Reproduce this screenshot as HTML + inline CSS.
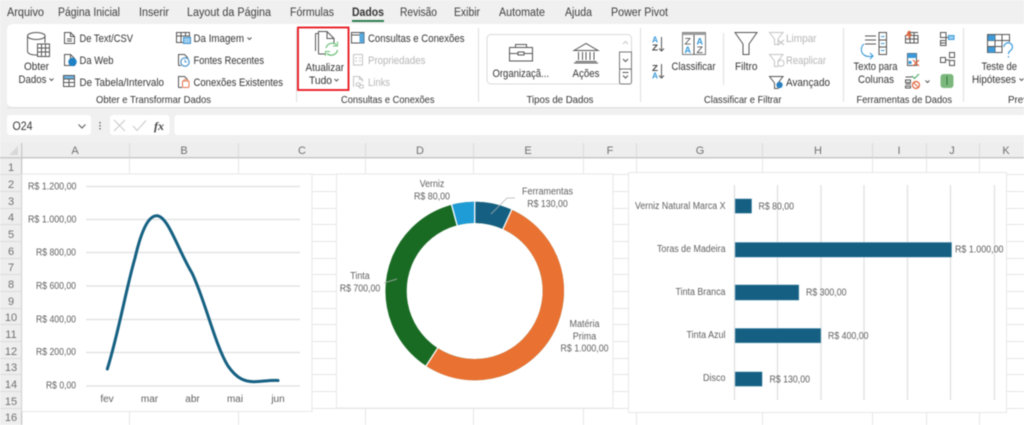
<!DOCTYPE html>
<html lang="pt-BR"><head><meta charset="utf-8"><title>Excel</title>
<style>
html,body{margin:0;padding:0;width:1024px;height:425px;overflow:hidden;background:#fff}
svg{display:block;filter:blur(.4px)}
text{font-family:"Liberation Sans",sans-serif;font-size:11px;fill:#333}
.g{fill:#b5b5b5}
.c{fill:#5f5f5f;font-size:10px}
.h{fill:#707070;font-size:11px}
.t{fill:#3d3d3d;font-size:11.500px}
.i{fill:none;stroke:#555;stroke-width:1}
.l{stroke:#e0e0e0;stroke-width:1.300}
.m{stroke:#e6e6e6;stroke-width:1}
</style></head><body>
<svg width="1024" height="425" viewBox="0 0 1024 425" xmlns="http://www.w3.org/2000/svg">
<rect width="1024" height="425" fill="#fff"/>
<rect width="1024" height="158" fill="#f0f0f0"/>
<!-- tabs -->
<g class="tabs">
<text class="t" x="7" y="16" textLength="37" lengthAdjust="spacingAndGlyphs">Arquivo</text>
<text class="t" x="58" y="16" textLength="62" lengthAdjust="spacingAndGlyphs">Página Inicial</text>
<text class="t" x="139" y="16" textLength="30" lengthAdjust="spacingAndGlyphs">Inserir</text>
<text class="t" x="187" y="16" textLength="84" lengthAdjust="spacingAndGlyphs">Layout da Página</text>
<text class="t" x="290" y="16" textLength="44" lengthAdjust="spacingAndGlyphs">Fórmulas</text>
<text class="t" x="352" y="16" textLength="32" lengthAdjust="spacingAndGlyphs" style="font-weight:bold;fill:#333">Dados</text>
<text class="t" x="400" y="16" textLength="37" lengthAdjust="spacingAndGlyphs">Revisão</text>
<text class="t" x="454" y="16" textLength="26" lengthAdjust="spacingAndGlyphs">Exibir</text>
<text class="t" x="499" y="16" textLength="46" lengthAdjust="spacingAndGlyphs">Automate</text>
<text class="t" x="565" y="16" textLength="27" lengthAdjust="spacingAndGlyphs">Ajuda</text>
<text class="t" x="611" y="16" textLength="57" lengthAdjust="spacingAndGlyphs">Power Pivot</text>
</g>
<rect x="352" y="20" width="32" height="2" fill="#2e7d4f"/>
<!-- ribbon -->
<rect x="7" y="24" width="1030" height="83" rx="6" fill="#fff"/>
<rect x="7" y="107" width="1017" height="1.500" fill="#e2e2e2"/>
<g stroke="#dedede"><path d="M296.500 28V102M478.500 28V102M640.500 28V102M843.500 28V102M963.500 28V102M723.500 33V85"/></g>
<!-- Obter dados -->
<g class="i">
<path d="M27.500 36V51C27.500 54 32 55 37 55M45 36V43"/><ellipse cx="36.300" cy="36" rx="8.800" ry="3.500"/>
<rect x="37.500" y="44" width="12" height="12.500" fill="#fff"/><path d="M37.500 48H49.500M37.500 52H49.500M41.500 44V56.500M45.500 44V56.500"/>
</g>
<text x="24" y="70" textLength="25" lengthAdjust="spacingAndGlyphs">Obter</text>
<text x="18.500" y="83" textLength="28" lengthAdjust="spacingAndGlyphs">Dados</text>
<path class="i" d="M49.500 78.500l2 2 2-2"/>
<!-- small icons col 1 -->
<g class="i">
<path d="M64.500 43.500V32.500H70.500L74.500 36.500V43.500ZM70.500 32.500V36.500H74.500"/><path d="M67 39H72M67 41H72"/>
<path d="M64.500 65.500V54.500H70.500L74.500 58.500V65.500ZM70.500 54.500V58.500H74.500"/>
</g>
<circle cx="72.500" cy="62" r="4.200" fill="#1f80c4"/>
<g class="i"><rect x="63.500" y="75.500" width="11" height="11"/><path d="M63.500 79H74.500M63.500 82.500H74.500M69 79V86.500"/></g>
<rect x="64" y="76" width="10" height="2.500" fill="#6db6e6"/>
<text x="79.500" y="42" textLength="53.500" lengthAdjust="spacingAndGlyphs">De Text/CSV</text>
<text x="79.500" y="64" textLength="34" lengthAdjust="spacingAndGlyphs">Da Web</text>
<text x="79.500" y="86" textLength="84.500" lengthAdjust="spacingAndGlyphs">De Tabela/Intervalo</text>
<!-- col 2 -->
<g class="i"><rect x="176.500" y="32.500" width="13" height="10"/><path d="M176.500 36H189.500M181 32.500V42.500M185.500 32.500V36"/><rect x="183.500" y="37.500" width="7" height="6" fill="#9ccdef" stroke="#3d93cf"/>
<path d="M178.500 65.500V54.500H184.500L187.500 57.500V59M178.500 65.500H181"/></g>
<circle cx="185" cy="62" r="4.200" fill="#fff" stroke="#2f86c5"/><path d="M185 59.500V62H187" fill="none" stroke="#2f86c5" stroke-width=".8"/>
<path class="i" d="M178.500 87.500V76.500H184.500L187.500 79.500V80M178.500 87.500H182"/>
<rect x="182.500" y="81" width="6.500" height="6.500" rx="1" fill="#fff" stroke="#e2744a"/><path d="M184 81v-1.500h3.500V81" fill="none" stroke="#e2744a" stroke-width=".8"/>
<text x="193.500" y="42" textLength="50.500" lengthAdjust="spacingAndGlyphs">Da Imagem</text>
<path class="i" d="M247.500 37.500l2 2 2-2"/>
<text x="193.500" y="64" textLength="70.500" lengthAdjust="spacingAndGlyphs">Fontes Recentes</text>
<text x="193.500" y="86" textLength="89.500" lengthAdjust="spacingAndGlyphs">Conexões Existentes</text>
<text x="96" y="103" textLength="115" lengthAdjust="spacingAndGlyphs" style="font-size:10.500px">Obter e Transformar Dados</text>
<!-- Atualizar -->
<rect x="298" y="27.500" width="50.500" height="62.500" fill="none" stroke="#e8141c" stroke-width="1.800"/>
<g class="i"><path d="M315.500 33.500V51M315.500 33.500H318"/><path d="M318.500 54V31.500H327L334 38.500V43M327 31.500V38.500H334M318.500 54H325"/></g>
<g fill="none" stroke="#6cbf78" stroke-width="1.200"><path d="M326 48a6.300 6.300 0 0 1 10.500-3"/><path d="M337.500 50a6.300 6.300 0 0 1-10.500 3.500"/><path d="M337.500 41.500V46H333M325.500 56V51.500H330" stroke-width="1"/></g>
<text x="305.500" y="71" textLength="38.500" lengthAdjust="spacingAndGlyphs">Atualizar</text>
<text x="309" y="84" textLength="23" lengthAdjust="spacingAndGlyphs">Tudo</text>
<path class="i" d="M334.500 79l2 2 2-2"/>
<!-- Consultas -->
<g class="i"><rect x="351.500" y="32.500" width="12.500" height="10.500"/><path d="M351.500 35H364"/></g>
<rect x="359.500" y="33" width="4.500" height="10" fill="#57a7dd"/>
<g fill="none" stroke="#c4c4c4"><rect x="353.500" y="54.500" width="9" height="10.500"/><path d="M355 58h2M359 58h2M355 61h2M359 61h2"/>
<path d="M353.500 87V76.500H359.500L362.500 79.500V82M359.500 76.500V79.500H362.500"/><rect x="356" y="83" width="4.500" height="3" rx="1.500"/><rect x="359" y="85" width="4.500" height="3" rx="1.500"/></g>
<text x="368" y="42" textLength="96.500" lengthAdjust="spacingAndGlyphs">Consultas e Conexões</text>
<text class="g" x="368" y="64" textLength="57.500" lengthAdjust="spacingAndGlyphs">Propriedades</text>
<text class="g" x="368" y="86" textLength="22" lengthAdjust="spacingAndGlyphs">Links</text>
<text x="341" y="103" textLength="93.500" lengthAdjust="spacingAndGlyphs" style="font-size:10.500px">Consultas e Conexões</text>
<!-- Tipos -->
<rect x="487" y="34.500" width="144.500" height="49.500" rx="4" fill="#fff" stroke="#dadada"/>
<g class="i"><rect x="509.500" y="47.500" width="23" height="13.500"/><path d="M509.500 53.500H518M524 53.500H532.500M515.500 47.500V44.500H526.500V47.500"/><rect x="518" y="52" width="6" height="3"/></g>
<g class="i"><path d="M574 50.500L586 43.500L598 50.500ZM575.500 61.500H596.500M574 63H598"/><path d="M578.500 52V60M582.500 52V60M586 52V60M590 52V60M594 52V60"/></g>
<text x="492.500" y="77" textLength="56.500" lengthAdjust="spacingAndGlyphs">Organizaçã...</text>
<text x="572.500" y="77" textLength="27" lengthAdjust="spacingAndGlyphs">Ações</text>
<rect x="619.500" y="52" width="12" height="17" fill="#fff" stroke="#777"/><rect x="619.500" y="69" width="12" height="15" rx="2" fill="#fff" stroke="#777"/>
<path d="M623 44l2.500-2.500L628 44" fill="none" stroke="#c8c8c8"/>
<path d="M623 59l2.500 2.500L628 59" class="i"/>
<path d="M622.500 72.500H628.500M623 75.500l2.500 2.500 2.500-2.500" class="i"/>
<text x="526.500" y="103" textLength="67" lengthAdjust="spacingAndGlyphs" style="font-size:10.500px">Tipos de Dados</text>
<!-- Classificar -->
<text x="652" y="42.500" textLength="6" lengthAdjust="spacingAndGlyphs" style="font-size:8px;font-weight:bold;fill:#3a9ad9">A</text>
<text x="652" y="50.500" textLength="6" lengthAdjust="spacingAndGlyphs" style="font-size:8px;font-weight:bold;fill:#444">Z</text>
<path class="i" d="M661.500 37V51M659 48.500l2.500 2.500 2.500-2.500"/>
<text x="652" y="71" textLength="6" lengthAdjust="spacingAndGlyphs" style="font-size:8px;font-weight:bold;fill:#444">Z</text>
<text x="652" y="78.500" textLength="6" lengthAdjust="spacingAndGlyphs" style="font-size:8px;font-weight:bold;fill:#3a9ad9">A</text>
<path class="i" d="M661.500 64V78M659 75.500l2.500 2.500 2.500-2.500"/>
<rect x="682.500" y="32.500" width="23" height="22" fill="#fff" stroke="#777"/><rect x="682.500" y="32.500" width="23" height="2.500" fill="#9a9a9a"/><path class="i" d="M694 35V54.500"/>
<text x="684.500" y="44.500" textLength="6.500" lengthAdjust="spacingAndGlyphs" style="font-size:9px;fill:#444">Z</text>
<text x="684.500" y="53" textLength="6.500" lengthAdjust="spacingAndGlyphs" style="font-size:9px;font-weight:bold;fill:#3a9ad9">A</text>
<text x="696.500" y="44.500" textLength="6.500" lengthAdjust="spacingAndGlyphs" style="font-size:9px;font-weight:bold;fill:#3a9ad9">A</text>
<text x="696.500" y="53" textLength="6.500" lengthAdjust="spacingAndGlyphs" style="font-size:9px;fill:#444">Z</text>
<text x="671.500" y="70" textLength="44" lengthAdjust="spacingAndGlyphs">Classificar</text>
<!-- Filtro -->
<path class="i" d="M735 32.500H757L749 44V54.500H743V44Z"/>
<text x="735" y="70" textLength="22.500" lengthAdjust="spacingAndGlyphs">Filtro</text>
<g fill="none" stroke="#c4c4c4"><path d="M769.500 32.500H783L778 39V44.500H774.500V39Z"/><path d="M778 40l6 5M784 40l-6 5" stroke="#bcbcbc"/><path d="M769.500 54.500H783L778 61V66.500H774.500V61Z"/><path d="M778 63a3 3 0 0 1 6 0a3 3 0 0 1-5 2.500"/></g>
<path class="i" d="M769.500 76.500H783L778 83V88.500H774.500V83Z"/>
<circle cx="779.500" cy="85" r="3.200" fill="#2a7fc0"/>
<text class="g" x="786" y="42" textLength="30.500" lengthAdjust="spacingAndGlyphs">Limpar</text>
<text class="g" x="786" y="64" textLength="40" lengthAdjust="spacingAndGlyphs">Reaplicar</text>
<text x="786" y="86" textLength="44" lengthAdjust="spacingAndGlyphs">Avançado</text>
<text x="704" y="103" textLength="77.500" lengthAdjust="spacingAndGlyphs" style="font-size:10.500px">Classificar e Filtrar</text>
<!-- Ferramentas -->
<g class="i"><path d="M865 36H876M865 40H876M865 44H876"/><rect x="879" y="32.500" width="7.500" height="22"/><path d="M879 40H886.500M879 47H886.500"/></g>
<path d="M881 36.500h3.500M881 43.500h3.500M881 50.500h3.500" stroke="#3a9ad9"/>
<path d="M864 44a7 7 0 0 0 0 11c3 2 7 1.500 9 1M870 53l3 3-3 3" fill="none" stroke="#3a9ad9" stroke-width="1.100"/>
<text x="853.500" y="70" textLength="44" lengthAdjust="spacingAndGlyphs">Texto para</text>
<text x="858" y="83" textLength="36" lengthAdjust="spacingAndGlyphs">Colunas</text>
<g class="i"><rect x="905.500" y="35.500" width="12.500" height="7.500"/><path d="M905.500 39H918M910 32V43M914 32V43M910 32.500H918"/></g>
<path d="M908 31l-2 5h3l-2 5 5-7h-3l2-3z" fill="#e2643b"/>
<rect x="907.500" y="53.500" width="9" height="12" fill="#fff" stroke="#555"/><rect x="907.500" y="53.500" width="9" height="4.500" fill="#3a9ad9"/><rect x="908.500" y="61" width="3" height="3" fill="#3a9ad9"/>
<path d="M913 60l6 6M919 60l-6 6" stroke="#e2643b" stroke-width="1.200"/>
<g class="i"><path d="M905.500 77H912M905.500 84H911"/><rect x="905.500" y="80" width="5" height="2.500"/><path d="M905.500 86h5v2h-5z"/></g>
<path d="M912 76l2.500 2.500L919 74" fill="none" stroke="#4aa564" stroke-width="1.100"/>
<circle cx="916" cy="85" r="3.500" fill="#fff" stroke="#e2643b" stroke-width="1.200"/><path d="M913.500 82.500l5 5" stroke="#e2643b"/>
<path class="i" d="M925.500 80.500l2 2 2-2"/>
<g class="i"><rect x="940.500" y="32.500" width="5.500" height="5"/><rect x="940.500" y="40.500" width="5.500" height="5"/><path d="M946 35v8h-5M946 37.500h3"/>
<rect x="940.500" y="57.500" width="5" height="5"/><rect x="949.500" y="52.500" width="5" height="5"/><rect x="949.500" y="60.500" width="5" height="5"/><path d="M945.500 60h4"/></g>
<rect x="948.500" y="35.500" width="5.500" height="4" fill="#9ccdef" stroke="#3a9ad9"/>
<rect x="940.500" y="74" width="13" height="14" rx="3" fill="#7cb87e"/><path d="M947 76v9" stroke="#2f7c36"/>
<text x="856.500" y="103" textLength="95.500" lengthAdjust="spacingAndGlyphs" style="font-size:10.500px">Ferramentas de Dados</text>
<!-- Teste -->
<g class="i"><rect x="987.500" y="34.500" width="22" height="18"/><path d="M987.500 40.500H1009.500M987.500 46.500H1009.500M995 34.500V52.500M1002 34.500V52.500"/></g>
<rect x="988" y="35" width="7" height="5.500" fill="#3f9bd8"/><rect x="988" y="47" width="7" height="5.500" fill="#3f9bd8"/>
<rect x="1002.500" y="42" width="11" height="11" fill="#fff"/>
<path d="M1004 47a4.200 4.200 0 1 1 6.500 3.500c-1.500 1-2 2-2 3.500M1008.500 56v1.500" fill="none" stroke="#3a9ad9" stroke-width="1.200"/>
<text x="981.500" y="70" textLength="35.500" lengthAdjust="spacingAndGlyphs">Teste de</text>
<text x="972" y="83" textLength="44" lengthAdjust="spacingAndGlyphs">Hipóteses</text>
<path class="i" d="M1019.500 78.500l2 2 2-2"/>
<text x="1008" y="103" textLength="38" lengthAdjust="spacingAndGlyphs" style="font-size:10.500px">Previsão</text>
<!-- formula bar -->
<rect x="7" y="115" width="84" height="20" rx="3" fill="#fff"/>
<text x="12.500" y="130" textLength="20" lengthAdjust="spacingAndGlyphs" style="font-size:11.500px">O24</text>
<path class="i" d="M78.500 124.500l3.500 3.500 3.500-3.500"/>
<path d="M100 122v1.500M100 125v1.500M100 128v1.500" stroke="#555" stroke-width="1.200"/>
<rect x="110" y="115" width="59.500" height="20" rx="3" fill="#fff"/>
<path d="M114 120l11 11M125 120l-11 11M133 126l4 4.500 9-10" fill="none" stroke="#c8c8c8"/>
<text x="154" y="130" style="font-family:'Liberation Serif',serif;font-style:italic;font-weight:bold;font-size:12px;fill:#444">fx</text>
<rect x="174.500" y="115" width="860" height="20" rx="3" fill="#fff"/>
<!-- sheet grid -->
<rect x="0" y="143" width="1024" height="15" fill="#eeeeee"/>
<rect x="0" y="143" width="22" height="282" fill="#eeeeee"/>
<path d="M18 146V155H9Z" fill="#d8d8d8"/>
<rect x="0" y="157" width="1024" height="1.500" fill="#c8c8c8"/>
<rect x="21" y="143" width="1.300" height="282" fill="#c8c8c8"/>
<g class="m">
<path d="M22 174.500H1024M22 191.500H1024M22 208.500H1024M22 224.500H1024M22 241.500H1024M22 258.500H1024M22 274.500H1024M22 291.500H1024M22 308.500H1024M22 324.500H1024M22 341.500H1024M22 358.500H1024M22 374.500H1024M22 391.500H1024M22 408.500H1024"/>
<path d="M129.500 158V425M238.500 158V425M365.500 158V425M473.500 158V425M583.500 158V425M636.500 158V425M762.500 158V425M872.500 158V425M926.500 158V425M979.500 158V425"/>
</g>
<g stroke="#dcdcdc"><path d="M129.500 143V157M238.500 143V157M365.500 143V157M473.500 143V157M583.500 143V157M636.500 143V157M762.500 143V157M872.500 143V157M926.500 143V157M979.500 143V157"/>
<path d="M0 174.500H21M0 191.500H21M0 208.500H21M0 224.500H21M0 241.500H21M0 258.500H21M0 274.500H21M0 291.500H21M0 308.500H21M0 324.500H21M0 341.500H21M0 358.500H21M0 374.500H21M0 391.500H21M0 408.500H21"/></g>
<g>
<text class="h" x="75" y="154" text-anchor="middle">A</text><text class="h" x="184" y="154" text-anchor="middle">B</text><text class="h" x="302" y="154" text-anchor="middle">C</text><text class="h" x="420" y="154" text-anchor="middle">D</text><text class="h" x="528" y="154" text-anchor="middle">E</text><text class="h" x="610" y="154" text-anchor="middle">F</text><text class="h" x="700" y="154" text-anchor="middle">G</text><text class="h" x="818" y="154" text-anchor="middle">H</text><text class="h" x="899" y="154" text-anchor="middle">I</text><text class="h" x="952" y="154" text-anchor="middle">J</text><text class="h" x="1006" y="154" text-anchor="middle">K</text>
<text class="h" x="11" y="171" text-anchor="middle">1</text><text class="h" x="11" y="188" text-anchor="middle">2</text><text class="h" x="11" y="205" text-anchor="middle">3</text><text class="h" x="11" y="221" text-anchor="middle">4</text><text class="h" x="11" y="238" text-anchor="middle">5</text><text class="h" x="11" y="255" text-anchor="middle">6</text><text class="h" x="11" y="271" text-anchor="middle">7</text><text class="h" x="11" y="288" text-anchor="middle">8</text><text class="h" x="11" y="305" text-anchor="middle">9</text><text class="h" x="11" y="321" text-anchor="middle">10</text><text class="h" x="11" y="338" text-anchor="middle">11</text><text class="h" x="11" y="355" text-anchor="middle">12</text><text class="h" x="11" y="371" text-anchor="middle">13</text><text class="h" x="11" y="388" text-anchor="middle">14</text><text class="h" x="11" y="405" text-anchor="middle">15</text><text class="h" x="11" y="421" text-anchor="middle">16</text>
</g>
<!-- chart 1 -->
<rect x="22" y="174" width="290" height="237.500" fill="#fff" stroke="#e8e8e8"/>
<g class="l"><path d="M86 186.500H300M86 219.500H300M86 252.500H300M86 286H300M86 319.500H300M86 352.500H300M86 386H300"/></g>
<g>
<text class="c" x="76.500" y="189.500" text-anchor="end" textLength="48.500" lengthAdjust="spacingAndGlyphs">R$ 1.200,00</text>
<text class="c" x="76.500" y="222.500" text-anchor="end" textLength="48.500" lengthAdjust="spacingAndGlyphs">R$ 1.000,00</text>
<text class="c" x="76" y="255.500" text-anchor="end" textLength="40" lengthAdjust="spacingAndGlyphs">R$ 800,00</text>
<text class="c" x="76" y="289" text-anchor="end" textLength="40" lengthAdjust="spacingAndGlyphs">R$ 600,00</text>
<text class="c" x="76" y="322.500" text-anchor="end" textLength="40" lengthAdjust="spacingAndGlyphs">R$ 400,00</text>
<text class="c" x="76" y="355" text-anchor="end" textLength="40" lengthAdjust="spacingAndGlyphs">R$ 200,00</text>
<text class="c" x="76" y="388.500" text-anchor="end" textLength="30" lengthAdjust="spacingAndGlyphs">R$ 0,00</text>
<text class="c" x="107" y="402" text-anchor="middle">fev</text><text class="c" x="149.500" y="402" text-anchor="middle">mar</text><text class="c" x="192.500" y="402" text-anchor="middle">abr</text><text class="c" x="235" y="402" text-anchor="middle">mai</text><text class="c" x="278" y="402" text-anchor="middle">jun</text>
</g>
<path d="M107.300 369C118 335 127 285 135 258C141 232 148 215.700 156.700 215.700C168 215.700 178 250 192 273C205 300 215 345 228 366C237 379 245 381.700 254 381.700C262 381.700 270 380 278 380.500" fill="none" stroke="#156082" stroke-width="3" stroke-linecap="round"/>
<!-- chart 2 -->
<rect x="336.500" y="174" width="276.500" height="234" fill="#fff" stroke="#e8e8e8"/>
<g transform="rotate(-90 474.700 291)" fill="none" stroke-width="21.300">
<circle cx="474.700" cy="291" r="78.650" stroke="#196b24" pathLength="1910"/>
<circle cx="474.700" cy="291" r="78.650" stroke="#e97132" pathLength="1910" stroke-dasharray="1000 910" stroke-dashoffset="-130"/>
<circle cx="474.700" cy="291" r="78.650" stroke="#156082" pathLength="1910" stroke-dasharray="130 1780"/>
<circle cx="474.700" cy="291" r="78.650" stroke="#1f9bd6" pathLength="1910" stroke-dasharray="80 1830" stroke-dashoffset="-1830"/>
</g>
<g stroke="#fff" stroke-width="1.300"><path d="M474.700 201V224M502.500 230L512 209.100M438.200 347.200L425.700 366.500M457.400 226.300L451.400 204.100"/></g>
<path d="M491 214L507 198H515" fill="none" stroke="#b0b0b0" stroke-width=".8"/>
<path d="M384 283L397 279" fill="none" stroke="#b0b0b0" stroke-width=".8"/>
<text class="c" x="432" y="187" text-anchor="middle" textLength="24.500" lengthAdjust="spacingAndGlyphs">Verniz</text>
<text class="c" x="432" y="199.500" text-anchor="middle" textLength="36" lengthAdjust="spacingAndGlyphs">R$ 80,00</text>
<text class="c" x="547.500" y="194.500" text-anchor="middle" textLength="51" lengthAdjust="spacingAndGlyphs">Ferramentas</text>
<text class="c" x="547.500" y="207" text-anchor="middle" textLength="40.500" lengthAdjust="spacingAndGlyphs">R$ 130,00</text>
<text class="c" x="360" y="279" text-anchor="middle" textLength="19.500" lengthAdjust="spacingAndGlyphs">Tinta</text>
<text class="c" x="360" y="291.500" text-anchor="middle" textLength="40.500" lengthAdjust="spacingAndGlyphs">R$ 700,00</text>
<text class="c" x="584.500" y="327" text-anchor="middle" textLength="30" lengthAdjust="spacingAndGlyphs">Matéria</text>
<text class="c" x="584.500" y="339.500" text-anchor="middle" textLength="23.500" lengthAdjust="spacingAndGlyphs">Prima</text>
<text class="c" x="584.500" y="351.500" text-anchor="middle" textLength="48" lengthAdjust="spacingAndGlyphs">R$ 1.000,00</text>
<!-- chart 3 -->
<rect x="628.500" y="172.500" width="378" height="240" fill="#fff" stroke="#e8e8e8"/>
<g class="l"><path d="M734.500 185V400M777.500 185V400M821 185V400M864 185V400M907.500 185V400M950.500 185V400M994.500 185V400"/></g>
<g fill="#156082" stroke="#a9cbdc" stroke-width=".5">
<rect x="735" y="198.700" width="16.800" height="14.700"/>
<rect x="735" y="242.300" width="216.700" height="15"/>
<rect x="735" y="284.700" width="64" height="15.600"/>
<rect x="735" y="328.300" width="86" height="14.700"/>
<rect x="735" y="371.700" width="27.300" height="14.700"/>
</g>
<g>
<text class="c" x="725.500" y="209" text-anchor="end" textLength="90.500" lengthAdjust="spacingAndGlyphs">Verniz Natural Marca X</text>
<text class="c" x="725.500" y="252" text-anchor="end" textLength="68.500" lengthAdjust="spacingAndGlyphs">Toras de Madeira</text>
<text class="c" x="725.500" y="295" text-anchor="end" textLength="50" lengthAdjust="spacingAndGlyphs">Tinta Branca</text>
<text class="c" x="725.500" y="338" text-anchor="end" textLength="39" lengthAdjust="spacingAndGlyphs">Tinta Azul</text>
<text class="c" x="725.500" y="381" text-anchor="end" textLength="22.500" lengthAdjust="spacingAndGlyphs">Disco</text>
<text class="c" x="758.500" y="209.500" textLength="35.500" lengthAdjust="spacingAndGlyphs">R$ 80,00</text>
<text class="c" x="955" y="252.500" textLength="48.500" lengthAdjust="spacingAndGlyphs">R$ 1.000,00</text>
<text class="c" x="806" y="295.500" textLength="40.500" lengthAdjust="spacingAndGlyphs">R$ 300,00</text>
<text class="c" x="828" y="339" textLength="40.500" lengthAdjust="spacingAndGlyphs">R$ 400,00</text>
<text class="c" x="769.500" y="382.500" textLength="40.500" lengthAdjust="spacingAndGlyphs">R$ 130,00</text>
</g>
</svg>
</body></html>
